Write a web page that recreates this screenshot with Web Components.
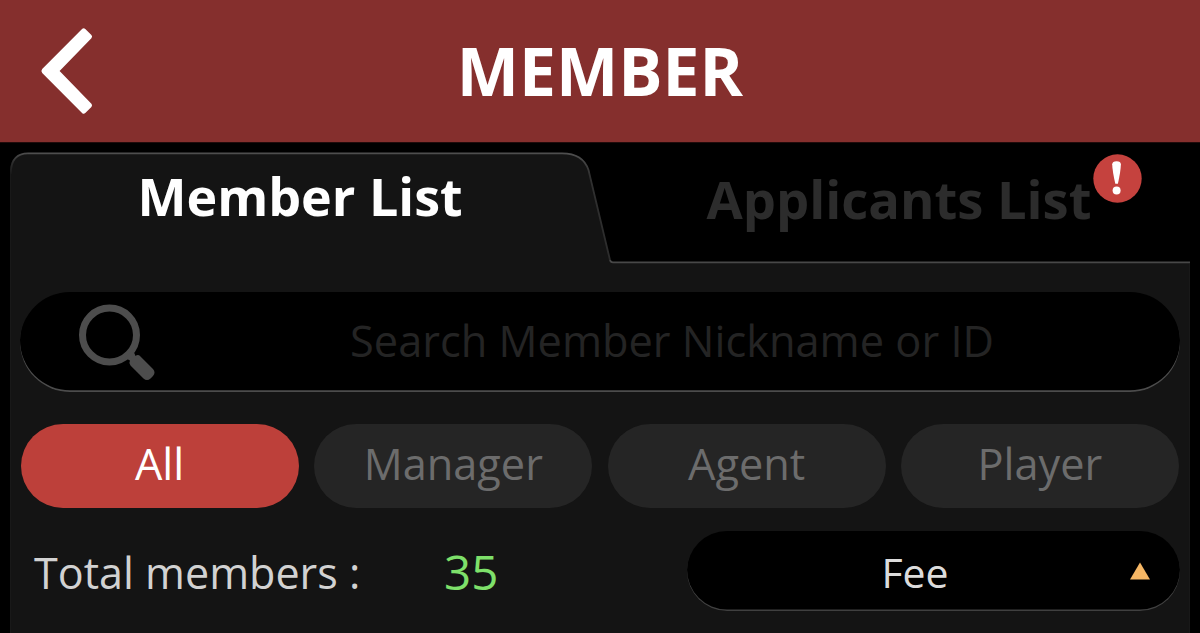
<!DOCTYPE html>
<html lang="en">
<head>
<meta charset="utf-8">
<title>Member</title>
<style>
html,body{margin:0;height:100%;background:#000;overflow:hidden}
body{font-family:"Open Sans","Noto Sans",sans-serif}
</style>
</head>
<body>
<member-screen></member-screen>
<script>
const define=(name,html)=>{
  customElements.define(name,class extends HTMLElement{
    constructor(){super();this.attachShadow({mode:'open'}).innerHTML=html;}
  });
};

define('app-header',`<style>
:host{display:grid;grid-template-columns:133px 1fr 133px;background:#852f2d;color:#fff;border-bottom:1px solid #210b0b;box-sizing:border-box;height:143px}
svg{display:block}
h1{margin:0;text-align:center;font-size:66px;font-weight:700;line-height:140px;white-space:nowrap}
</style>
<svg width="133" height="142" viewBox="0 0 133 142"><path d="M82.3 28.8Q83.8 27.5 85.3 29L91.4 35Q92.8 36.6 91.4 38.2L59.6 71L91.4 103.8Q92.8 105.4 91.4 107L85.3 113Q83.8 114.5 82.3 113.2L42.2 73Q40.6 71 42.2 69Z" fill="#fff"/></svg>
<h1><slot></slot></h1>`);

define('tab-item',`<style>
:host{display:block;height:110px;text-align:center;font-size:52.5px;font-weight:700;line-height:94px;color:#2c2c2c;white-space:nowrap;box-sizing:border-box;padding-left:18px}
:host([active]){color:#fff;padding-left:0;font-size:52px;line-height:88px}
span{position:relative;display:inline-block}
</style><span><slot></slot></span>`);

define('alert-badge',`<style>
:host{display:block;width:49px;height:49px}
svg{display:block}
</style><svg width="49" height="49" viewBox="0 0 49 49"><circle cx="24.5" cy="24.5" r="24.2" fill="#c5423e"/><path d="M19.2 10.2Q19.4 7.2 23.6 7.2Q27.8 7.2 27.9 10.2Q27.7 17 24.9 29.8H22.3Q19.4 17 19.2 10.2Z" fill="#fff"/><circle cx="23.6" cy="36.6" r="4" fill="#fff"/></svg>`);

define('tab-bar',`<style>
:host{display:grid;grid-template-columns:580px 600px;height:110px}
</style><slot></slot>`);

define('list-panel',`<style>
:host{display:block;position:relative;width:1180px;height:481px;margin:9px 10px 0}
.shape{position:absolute;inset:0}
.body{position:relative;display:flex;flex-direction:column}
</style>
<svg class="shape" width="1180" height="481" viewBox="0 0 1180 481">
<defs>
<linearGradient id="g" x1="0" y1="0" x2="0" y2="110" gradientUnits="userSpaceOnUse"><stop offset="0" stop-color="#505050"/><stop offset=".22" stop-color="#303030"/><stop offset="1" stop-color="#2c2c2c"/></linearGradient>
<linearGradient id="h" x1="0" y1="0" x2="0" y2="22" gradientUnits="userSpaceOnUse"><stop offset="0" stop-color="#505050"/><stop offset=".5" stop-color="#2c2c2c"/><stop offset="1" stop-color="#191919"/></linearGradient>
</defs>
<path d="M0 481V18Q1 1 18 1H552Q574 1 579 18L600 108Q600.5 110 603 110H1180V481Z" fill="#141414"/>
<path d="M.8 22Q.8 1.3 18 1.3" fill="none" stroke="url(#h)" stroke-width="1.8"/>
<path d="M18 1.3H552Q573 1.3 578.5 18L600 108" fill="none" stroke="url(#g)" stroke-width="1.8"/>
<path d="M600 108Q600.5 110.3 603 110.3H1180" fill="none" stroke="#484848" stroke-width="1.8"/>
<path d="M.5 22V481M1179.5 112V481" fill="none" stroke="#191919"/>
</svg><div class="body"><slot></slot></div>`);

define('search-field',`<style>
:host{display:grid;grid-template-columns:152px 1fr 8px;height:100px;margin:30px 10px 0;border-radius:50px;background:#000;box-shadow:inset 0 -1.8px 0 #4c4c4c;font-size:43.35px;line-height:97px;color:#242424;text-align:center;white-space:nowrap}
svg{display:block}
</style>
<svg width="152" height="100" viewBox="0 0 152 100"><circle cx="89.5" cy="43" r="27" fill="none" stroke="#4d4d4d" stroke-width="7"/><path d="M105 66L113 58L115.5 64Q118 62 120.5 64.5L133 77Q136 80.5 133 84L130.5 86.5Q127 89.5 123.5 86.5L110.5 73.5Q108.5 71 110 68.5Z" fill="#4d4d4d"/></svg>
<div><slot></slot></div>`);

define('filter-pill',`<style>
:host{display:block;height:84px;border-radius:42px;background:#252525;color:#6c6c6c;font-size:43.3px;line-height:80px;text-align:center;white-space:nowrap}
:host([active]){background:#bd403a;color:#fff;text-indent:-1px}
</style><slot></slot>`);

define('filter-group',`<style>
:host{display:grid;grid-template-columns:repeat(4,278px);gap:15.3px;margin:32px 0 0 11px}
</style><slot></slot>`);

define('sort-select',`<style>
:host{display:grid;grid-template-columns:1fr 22px;width:493px;height:80px;box-sizing:border-box;padding:0 29px 0 14px;border-radius:40px;background:#000;box-shadow:inset 0 -1.5px 0 #404040;color:#dcdcdc;font-size:41px;line-height:83px;text-align:center}
svg{display:block;margin-top:31px}
</style><div><slot></slot></div><svg width="22" height="18" viewBox="0 0 22 18"><path d="M11 .5L21 17.5H1Z" fill="#f6b765"/></svg>`);

define('summary-row',`<style>
:host{display:grid;grid-template-columns:410px 1fr 493px;margin:23px 10px 0 24px;height:80px;white-space:nowrap}
.label{font-size:43.1px;line-height:84px;color:#d2d2d2}
.count{font-size:47.5px;line-height:82px;color:#7ee06a}
</style><span class="label"><slot name="label"></slot></span><span class="count"><slot name="count"></slot></span><slot></slot>`);

define('member-screen',`<style>
:host{display:block;width:1200px;height:633px;overflow:hidden;background:#000}
alert-badge{position:absolute;left:387px;top:2px}
</style>
<app-header>MEMBER</app-header>
<list-panel>
<tab-bar><tab-item active>Member List</tab-item><tab-item>Applicants List<alert-badge></alert-badge></tab-item></tab-bar>
<search-field>Search Member Nickname or ID</search-field>
<filter-group><filter-pill active>All</filter-pill><filter-pill>Manager</filter-pill><filter-pill>Agent</filter-pill><filter-pill>Player</filter-pill></filter-group>
<summary-row><span slot="label">Total members :</span><span slot="count">35</span><sort-select>Fee</sort-select></summary-row>
</list-panel>`);
</script>
</body>
</html>
